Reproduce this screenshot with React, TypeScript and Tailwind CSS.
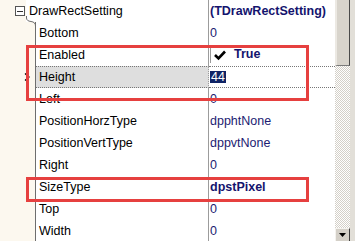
import React from 'react';

interface PropRow {
  name: string;
  value: string;
  bold?: boolean;
  top?: boolean;
  checkbox?: boolean;
  selected?: boolean;
}

const rows: PropRow[] = [
  { name: 'DrawRectSetting', value: '(TDrawRectSetting)', bold: true, top: true },
  { name: 'Bottom', value: '0' },
  { name: 'Enabled', value: 'True', bold: true, checkbox: true },
  { name: 'Height', value: '44', selected: true },
  { name: 'Left', value: '0' },
  { name: 'PositionHorzType', value: 'dpphtNone' },
  { name: 'PositionVertType', value: 'dppvtNone' },
  { name: 'Right', value: '0' },
  { name: 'SizeType', value: 'dpstPixel', bold: true },
  { name: 'Top', value: '0' },
  { name: 'Width', value: '0' },
];

const Value = ({ row }: { row: PropRow }) => {
  if (row.selected) {
    return (
      <span className="bg-[#0f2365] text-white px-[1px] leading-[12px] h-[12px] flex items-center">{row.value}</span>
    );
  }
  if (row.checkbox) {
    return (
      <div className="flex items-center gap-[5px] self-start mt-[1px]">
        <div className="w-[19px] h-[18px] border-l border-t border-[#9a9a9a] bg-white flex items-center justify-center">
          <svg width="14" height="12" viewBox="0 0 14 12">
            <path d="M2 6 L5.5 9.5 L12 2.5" fill="none" stroke="#000" strokeWidth="2.6" />
          </svg>
        </div>
        <span className="font-bold text-[#14146e]">{row.value}</span>
      </div>
    );
  }
  return <span className={row.bold ? 'font-bold text-[#14146e]' : 'text-[#1c1c72]'}>{row.value}</span>;
};

export default function App() {
  return (
    <div className="w-[355px] h-[241px] relative overflow-hidden flex bg-white text-[12.5px] text-black font-['Liberation_Sans',Arial,sans-serif]">
      {/* Property list */}
      <div className="w-[335px] flex flex-col shrink-0">
        {rows.map((row) =>
          row.top ? (
            <div key={row.name} className="h-[22px] flex shrink-0">
              <div className="w-[26px] bg-[#fcf8ef] flex items-center pl-[15px]">
                <div className="w-[10px] h-[10px] border border-[#555] bg-white flex items-center justify-center">
                  <div className="w-[6px] h-[1px] bg-[#333]" />
                </div>
              </div>
              <div className="w-[183px] border-r border-[#9c9c9c] pl-[3px] flex items-center bg-white">{row.name}</div>
              <div className="flex-1 pl-[1px] flex items-center">
                <Value row={row} />
              </div>
            </div>
          ) : (
            <div key={row.name} className="h-[22px] flex shrink-0">
              <div className="w-[36px] bg-[#fcf8ef] border-r border-[#6e6e6e] flex items-center justify-end pr-[4px]">
                {row.selected && (
                  <svg width="7" height="8" viewBox="0 0 7 8">
                    <path d="M1 0.5 L5 4 L1 7.5" fill="none" stroke="#000" strokeWidth="1.3" />
                  </svg>
                )}
              </div>
              <div
                className={`w-[173px] border-r border-r-[#9c9c9c] pl-[3px] flex items-center ${
                  row.selected ? 'bg-[#dedede] border-y border-dotted border-y-[#777]' : ''
                }`}
              >
                {row.name}
              </div>
              <div
                className={`flex-1 pl-[1px] flex items-center ${
                  row.selected ? 'border-y border-dotted border-[#777]' : ''
                }`}
              >
                <Value row={row} />
              </div>
            </div>
          )
        )}
      </div>

      {/* Scrollbar */}
      <div className="w-[15px] flex flex-col shrink-0">
        <div className="h-[66px] bg-[#d8d4cc] border-l-2 border-l-[#ece9e3] border-r border-r-[#4a4a4a] border-b border-b-[#7a7a7a]" />
        <div className="flex-1 bg-[repeating-conic-gradient(#d4d0c8_0_25%,#ffffff_0_50%)] bg-[length:2px_2px]" />
        <div className="h-[13px] bg-[#d4d0c8] border-l border-t border-[#f4f2ee] border-r border-r-[#404040] flex justify-center pt-[4px]">
          <svg width="7" height="4" viewBox="0 0 7 4">
            <path d="M0 0 H7 L3.5 4 Z" fill="#000" />
          </svg>
        </div>
      </div>
      <div className="w-[5px] bg-[#e2dfd8] shrink-0" />

      {/* Tree connector */}
      <svg className="absolute left-0 top-0" width="40" height="30" viewBox="0 0 40 30">
        <path d="M26.5 16 V18 Q26.5 21 31 21.5 Q35.5 22 35.5 26" fill="none" stroke="#6e6e6e" strokeWidth="1" />
      </svg>

      {/* Annotation boxes */}
      <div className="absolute left-[26px] top-[45px] w-[283px] h-[56px] border-[3px] border-[#e6403f]" />
      <div className="absolute left-[26px] top-[177px] w-[283px] h-[25px] border-[3px] border-[#e6403f]" />
    </div>
  );
}
